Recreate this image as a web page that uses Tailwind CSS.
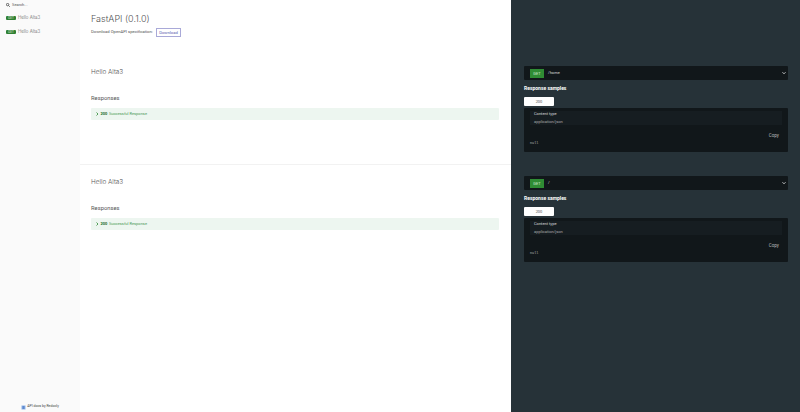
<!doctype html>
<html lang="en">
<head>
<meta charset="utf-8" />
<title>FastAPI - ReDoc</title>
<script src="https://cdn.jsdelivr.net/npm/@tailwindcss/browser@4"></script>
</head>
<body class="font-['Roboto',sans-serif] bg-white overflow-hidden">
<div class="flex w-[800px] h-[412px]">

  <!-- sidebar -->
  <aside class="flex flex-col shrink-0 w-[80px] h-full bg-[#fafafa]">
    <div class="flex items-center gap-[2px] h-[8px] mt-[1px] pl-[6px] text-[4px] text-[#555]">
      <svg class="w-[4px] h-[4px]" viewBox="0 0 10 10" fill="none" stroke="#444" stroke-width="2"><circle cx="4" cy="4" r="3"/><path d="M6.5 6.5 9.5 9.5"/></svg>
      <span>Search...</span>
    </div>
    <ul class="mt-[5px] space-y-[6px] pl-[6px]">
      <li class="flex items-center gap-[2px] h-[8px] font-['Inter',sans-serif] font-light text-[4.4px] text-[#666]">
        <span class="w-[10px] h-[4px] rounded-[1px] bg-[#2f8132] text-white text-[3px] leading-[4px] text-center">GET</span>
        Hello Alta3
      </li>
      <li class="flex items-center gap-[2px] h-[8px] font-['Inter',sans-serif] font-light text-[4.4px] text-[#666]">
        <span class="w-[10px] h-[4px] rounded-[1px] bg-[#2f8132] text-white text-[3px] leading-[4px] text-center">GET</span>
        Hello Alta3
      </li>
    </ul>
    <div class="flex items-center justify-center gap-[1px] mt-auto h-[8px] mb-[1px] text-[3.5px] text-[#444]">
      <svg class="w-[5px] h-[5px]" viewBox="0 0 10 10"><rect x="1" y="1" width="8" height="8" fill="#8fb4e8"/><path d="M3 3h4M3 5h4M3 7h4" stroke="#2f5fb3" stroke-width="1"/></svg>
      <span>API docs by Redocly</span>
    </div>
  </aside>

  <!-- middle column -->
  <main class="shrink-0 w-[431px] h-full text-[#333]">
    <section class="h-[165px] px-[11px] pt-[13px] border-b border-[#f2f2f2]">
      <h1 class="font-['Inter',sans-serif] font-light text-[9px] leading-[12px] text-[#555]">FastAPI (0.1.0)</h1>
      <div class="flex items-center gap-[2px] mt-[3px] text-[4.2px] text-[#555] whitespace-nowrap">
        <span class="w-[63px]">Download OpenAPI specification:</span>
        <span class="h-[9px] leading-[8px] border border-[#a9a9d8] text-[#5a5ab0] w-[25px] text-center">Download</span>
      </div>
      <h2 class="mt-[30px] font-['Inter',sans-serif] font-light text-[6.4px] leading-[10px] text-[#555]">Hello Alta3</h2>
      <h3 class="mt-[17px] text-[5.8px] leading-[8px] text-[#555]">Responses</h3>
      <div class="flex items-center gap-[1.5px] w-[408px] h-[12px] mt-[6px] pl-[5px] rounded-[1px] bg-[#edf6f0] text-[4px] text-[#4a9a56]">
        <svg class="w-[3px] h-[4px]" viewBox="0 0 6 8" fill="none" stroke="#1d8127" stroke-width="1.5"><path d="M1 1l3 3-3 3"/></svg>
        <strong class="font-bold text-[#1d6f27]">200</strong>
        <span>Successful Response</span>
      </div>
    </section>
    <section class="px-[11px] pt-[12px]">
      <h2 class="font-['Inter',sans-serif] font-light text-[6.4px] leading-[10px] text-[#555]">Hello Alta3</h2>
      <h3 class="mt-[17px] text-[5.8px] leading-[8px] text-[#555]">Responses</h3>
      <div class="flex items-center gap-[1.5px] w-[408px] h-[12px] mt-[6px] pl-[5px] rounded-[1px] bg-[#edf6f0] text-[4px] text-[#4a9a56]">
        <svg class="w-[3px] h-[4px]" viewBox="0 0 6 8" fill="none" stroke="#1d8127" stroke-width="1.5"><path d="M1 1l3 3-3 3"/></svg>
        <strong class="font-bold text-[#1d6f27]">200</strong>
        <span>Successful Response</span>
      </div>
    </section>
  </main>

  <!-- dark samples column -->
  <div class="flex-1 min-w-0 h-full pl-[13px] pt-[66px] bg-[#263238] text-white space-y-[24px]">
    <div class="w-[264px]">
      <div class="flex items-center h-[14px] pl-[6px] pr-[2px] rounded-[1px] bg-[#11171a]">
        <span class="w-[14px] h-[9px] mr-[4px] bg-[#2f8c34] text-[4px] leading-[9px] text-center text-[#cfe8d0]">GET</span>
        <span class="text-[4px] text-[#ddd]">/home</span>
        <svg class="ml-auto w-[4px] h-[4px]" viewBox="0 0 8 8" fill="none" stroke="#fff" stroke-width="1.5"><path d="M1 2.5l3 3 3-3"/></svg>
      </div>
      <h3 class="mt-[4px] text-[5px] leading-[8px] font-bold">Response samples</h3>
      <div class="w-[30px] h-[9px] mt-[5px] rounded-[1px] bg-white text-[#555] text-[4px] leading-[9px] text-center">200</div>
      <div class="h-[44px] mt-[2px] px-[6px] pt-[5px] rounded-[1px] bg-[#11171a]">
        <div class="h-[14px] px-[4px] bg-[#161d21] text-[4px] leading-[5px]">
          <div class="-mt-[2px] text-[#ddd]">Content type</div>
          <div class="mt-[2.5px] text-[#aaa]">application/json</div>
        </div>
        <div class="mt-[8px] pr-[3px] text-right text-[4.5px] leading-[6px] text-[#bbb]">Copy</div>
        <div class="mt-[1px] font-['Liberation_Mono',monospace] text-[3.5px] leading-[6px] text-[#bbb]">null</div>
      </div>
    </div>
    <div class="w-[264px]">
      <div class="flex items-center h-[14px] pl-[6px] pr-[2px] rounded-[1px] bg-[#11171a]">
        <span class="w-[14px] h-[9px] mr-[4px] bg-[#2f8c34] text-[4px] leading-[9px] text-center text-[#cfe8d0]">GET</span>
        <span class="text-[4px] text-[#ddd]">/</span>
        <svg class="ml-auto w-[4px] h-[4px]" viewBox="0 0 8 8" fill="none" stroke="#fff" stroke-width="1.5"><path d="M1 2.5l3 3 3-3"/></svg>
      </div>
      <h3 class="mt-[4px] text-[5px] leading-[8px] font-bold">Response samples</h3>
      <div class="w-[30px] h-[9px] mt-[5px] rounded-[1px] bg-white text-[#555] text-[4px] leading-[9px] text-center">200</div>
      <div class="h-[44px] mt-[2px] px-[6px] pt-[5px] rounded-[1px] bg-[#11171a]">
        <div class="h-[14px] px-[4px] bg-[#161d21] text-[4px] leading-[5px]">
          <div class="-mt-[2px] text-[#ddd]">Content type</div>
          <div class="mt-[2.5px] text-[#aaa]">application/json</div>
        </div>
        <div class="mt-[8px] pr-[3px] text-right text-[4.5px] leading-[6px] text-[#bbb]">Copy</div>
        <div class="mt-[1px] font-['Liberation_Mono',monospace] text-[3.5px] leading-[6px] text-[#bbb]">null</div>
      </div>
    </div>
  </div>

</div>
</body>
</html>
